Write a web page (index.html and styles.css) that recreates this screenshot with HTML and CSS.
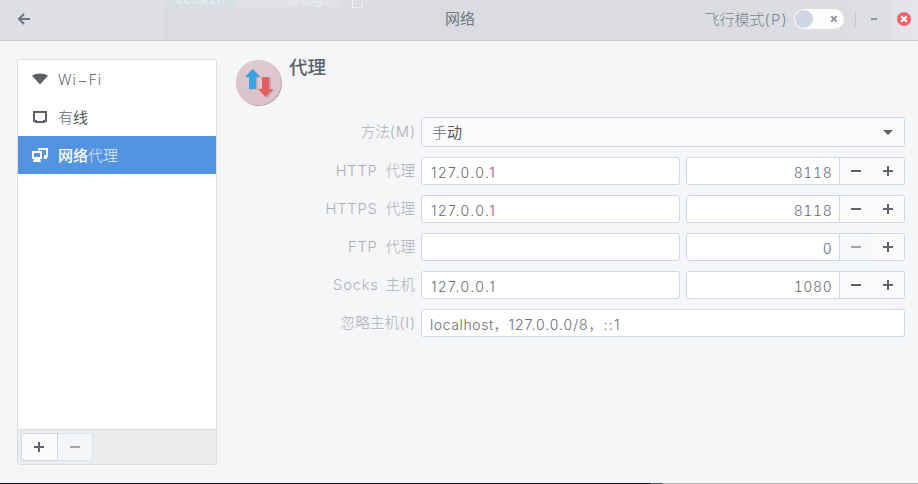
FILE: index.html
```html
<!DOCTYPE html>
<html lang="zh-CN">
<head>
<meta charset="utf-8">
<title>网络</title>
<link rel="stylesheet" href="styles.css">
</head>
<body>
<div class="window">
  <header class="titlebar">
    <div class="ghost"><div class="ghost-tab">teekin</div><div class="ghost-tab2">Blog</div><div class="ghost-box"></div></div>
    <svg class="back" width="14" height="14" viewBox="0 0 14 14"><path d="M13 7H2.5M7 2L2 7l5 5" fill="none" stroke="#6b728a" stroke-width="2"/></svg>
    <h1 class="title">网络</h1>
    <div class="controls">
      <span class="flight">飞行模式<span class="paren">(P)</span></span>
      <div class="switch"><span class="knob"></span><svg width="8" height="8" viewBox="0 0 8 8"><path d="M1.2 1.2l5.4 5.4M6.6 1.2L1.2 6.6" stroke="#8b8e97" stroke-width="1.8"/></svg></div>
      <span class="sep"></span>
      <span class="minimize"></span>
      <svg class="close" width="14" height="14" viewBox="0 0 14 14"><circle cx="7" cy="7" r="7" fill="#f8616b"/><path d="M4.2 4.2l5.6 5.6M9.8 4.2L4.2 9.8" stroke="#fff" stroke-width="2"/></svg>
    </div>
  </header>
  <div class="content">
    <aside class="sidebar">
      <ul class="devices">
        <li><svg width="16" height="16" viewBox="0 0 16 16"><path d="M0 4.8Q3 2.6 8 2.6T16 4.800L8 13.500z" fill="#5c616c"/></svg><span class="wifi">Wi<span class="dash">−</span>Fi</span></li>
        <li><svg width="16" height="16" viewBox="0 0 16 16"><path d="M2 3h12v9h-2v1H4v-1H2z" fill="none" stroke="#5c616c" stroke-width="2"/></svg><span>有<b>线</b></span></li>
        <li class="selected"><svg width="16" height="16" viewBox="0 0 16 16"><path d="M7 3.5V2h8v7h-3" fill="none" stroke="#fff" stroke-width="2"/><path d="M12 10h3v2h-3z" fill="#fff"/><path d="M1 5h8v6H1z" fill="none" stroke="#fff" stroke-width="2"/><path d="M2 12h6l1 3H1z" fill="#fff"/></svg><span><b>网络</b>代理</span></li>
      </ul>
      <div class="toolbar">
        <div class="tool add"><i class="plus"></i></div><div class="tool remove"><i class="minus"></i></div>
      </div>
    </aside>
    <main class="main">
      <div class="heading">
        <svg width="48" height="48" viewBox="0 0 48 48">
          <defs><linearGradient id="disc" x2="0" y2="1"><stop stop-color="#dfcbd1"/><stop offset="1" stop-color="#dac0c9"/></linearGradient></defs>
          <circle cx="24.2" cy="24.2" r="22.8" fill="#b9a5ad"/><circle cx="23.500" cy="23.500" r="22.600" fill="url(#disc)"/>
          <path d="M19 10.500L26 18.500H22.500V30.500H15V18.500H12z" fill="#c1a6b0"/><path d="M29 18.500h7v12h4L32 39l-7-7.500H29z" fill="#c1a6b0"/>
          <path d="M17.500 10L25 18h-4v12h-7V18h-4z" fill="#38a4e4"/><path d="M27 18h7v12h4l-7.500 8L23 30h4z" fill="#e75e62"/>
        </svg>
        <h2>代理</h2>
      </div>
      <div class="form">
        <label class="first">方法<span class="paren">(M)</span></label>
        <div class="select"><span>手<b>动</b></span><svg width="10" height="5" viewBox="0 0 10 5"><path d="M0 0h10L5 5z" fill="#5c616c"/></svg></div>

        <label><span class="http">HTTP</span>代理</label>
        <div class="pair"><div class="entry"><span class="ip">127.0.0.1</span></div><div class="spin"><span class="port">8118</span><div class="step"><i class="minus"></i></div><div class="step"><i class="plus"></i></div></div></div>

        <label><span class="https">HTTPS</span>代理</label>
        <div class="pair"><div class="entry"><span class="ip">127.0.0.1</span></div><div class="spin"><span class="port">8118</span><div class="step"><i class="minus"></i></div><div class="step"><i class="plus"></i></div></div></div>

        <label><span class="ftp">FTP</span>代理</label>
        <div class="pair"><div class="entry"></div><div class="spin"><span class="port">0</span><div class="step off"><i class="minus"></i></div><div class="step"><i class="plus"></i></div></div></div>

        <label><span class="socks">Socks</span>主机</label>
        <div class="pair"><div class="entry"><span class="ip">127.0.0.1</span></div><div class="spin"><span class="port">1080</span><div class="step"><i class="minus"></i></div><div class="step"><i class="plus"></i></div></div></div>

        <label>忽略主机<span class="paren">(I)</span></label>
        <div class="entry ignore"><span class="host">localhost，</span><span class="net">127.0.0.0/8，</span><span class="v6">::1</span></div>
      </div>
    </main>
  </div>
  <footer class="edge"></footer>
</div>
</body>
</html>
```
FILE: styles.css
```css
* { box-sizing: border-box; }
body { margin: 0; font: 300 14px/20px Inter, "Noto Sans CJK SC", sans-serif; color: #686d7a; }
.window { width: 918px; height: 484px; display: flex; flex-direction: column; background: #f5f6f8; overflow: hidden; }
b { font-weight: 400; color: #555a66; }

.titlebar { position: relative; height: 41px; flex: none; display: flex; align-items: center; justify-content: space-between; padding: 0 7px 2px 17px; border-bottom: 1px solid #c8cad0; background: linear-gradient(90deg, #dedfe3 0 163px, #dadce0 164px 660px, #dddee2 885px, #e3e4e9 900px, #e5e6eb); }
.ghost { position: absolute; inset: 0 0 auto 0; height: 8px; padding-left: 163px; display: flex; overflow: hidden; font: bold 14px/14px "Liberation Mono", monospace; color: #e8ebee; }
.ghost-tab { width: 74px; height: 7px; padding-left: 12px; background: #d5dfe6; line-height: 0; overflow: hidden; }
.ghost-tab2 { width: 104px; height: 7px; padding-left: 52px; line-height: 0; background: #dfe1e5; overflow: hidden; }
.ghost-box { width: 11px; height: 8px; margin-left: 11px; border: 1px solid #eceef0; border-top: 0; }
.title { position: absolute; left: 0; width: 100%; margin: 0; padding-left: 2px; text-align: center; font-size: 15px; font-weight: 400; color: #707689; }
.controls { display: flex; align-items: center; }
.flight { font-size: 15px; color: #7d8495; margin-right: 6px; padding-top: 2px; }
.paren { letter-spacing: 1.2px; }
.switch { width: 50px; height: 20px; border-radius: 10px; background: #fcfcfd; display: flex; align-items: center; justify-content: space-between; padding: 0 6px 0 1px; }
.knob { width: 18px; height: 18px; border-radius: 9px; background: #cfd6e6; }
.sep { width: 1px; height: 15px; background: #c6c8ce; margin: 0 15px 0 11px; }
.minimize { width: 6px; height: 2px; background: #8e93a1; margin-right: 20px; }

.content { flex: 1; display: flex; padding: 18px 13px 0 17px; }
.sidebar { width: 200px; height: 406px; border: 1px solid #dbdee3; border-radius: 0 0 3px 3px; background: #fff; display: flex; flex-direction: column; overflow: hidden; }
.devices { list-style: none; margin: 0; padding: 0; flex: 1; }
.devices li { height: 38px; display: flex; align-items: center; gap: 10px; padding-left: 14px; font-size: 15px; }
.devices li > span { padding-top: 2px; }
.devices .selected { background: #5294e2; color: #e4eefb; }
.selected b { color: #fff; font-weight: 500; }
.devices li > .wifi { font-size: 14px; letter-spacing: .9px; padding-top: 1px; }
.dash { display: inline-block; transform: scaleX(1.25); margin: 0 1px; }
.toolbar { height: 35px; border-top: 1px solid #dbdee3; background: #ebecee; padding: 3px; display: flex; }
.tool { height: 28px; border: 1px solid #cfd6e6; display: grid; place-items: center; }
.add { width: 37px; padding-right: 1px; border-radius: 3px 0 0 3px; background: #fbfbfc; }
.remove { width: 35px; border-left: 0; border-color: #dde3ed; border-radius: 0 3px 3px 0; background: #f4f5f7; }
.minus, .plus { width: 10px; height: 10px; background: linear-gradient(#5c616c, #5c616c) center / 10px 2px no-repeat; }
.plus { background: linear-gradient(#5c616c, #5c616c) center / 10px 2px no-repeat, linear-gradient(#5c616c, #5c616c) center / 2px 10px no-repeat; }
.remove .minus, .off .minus { opacity: .55; }

.main { flex: 1; padding-left: 18px; }
.heading { height: 58px; display: flex; gap: 6px; }
h2 { margin: -6px 0 0; font-size: 18.500px; line-height: 28px; font-weight: 500; color: #5c616c; }
.form { display: grid; grid-template-columns: 180px 484px; column-gap: 6px; row-gap: 10px; }
label { height: 28px; line-height: 28px; text-align: right; font-size: 14.700px; color: #acafb5; white-space: nowrap; display: flex; justify-content: flex-end; align-items: center; }
label .paren { margin-right: -1px; letter-spacing: .9px; }
.first { height: 30px; }
.select { height: 30px; border: 1px solid #cfd6e6; border-radius: 3px; background: #fbfbfc; padding: 0 11px 0 10px; display: flex; align-items: center; justify-content: space-between; font-size: 15px; }
.select span { padding-top: 1px; }
.pair { display: flex; gap: 6px; }
.entry, .spin { height: 28px; background: #fff; border: 1px solid #cfd6e6; border-radius: 3px; display: flex; align-items: center; color: #666b77; }
.entry { width: 259px; padding: 3px 0 0 9px; }
.ignore { width: 484px; padding-left: 8px; }
.spin { width: 219px; overflow: hidden; }
.port { width: 153px; padding: 3px 7px 0 0; text-align: right; font-variant-numeric: tabular-nums; letter-spacing: .6px; }
.step { width: 32px; height: 26px; display: grid; place-items: center; background: #fbfbfc; }
.port + .step { width: 33px; border-left: 1px solid #cfd6e6; }
.step.off { background: #f6f7f9; }
.http, .https, .ftp { letter-spacing: .8px; margin-right: 8px; }
.socks { letter-spacing: .8px; margin-right: 7px; }
.ip { letter-spacing: 1.450px; }
.host { letter-spacing: .6px; }
.net { letter-spacing: .95px; }
.v6 { letter-spacing: 1.300px; }

.edge { height: 1px; flex: none; background: linear-gradient(90deg, #111217 0 650px, #50545a 651px 662px, #b3b6b5 663px); }
```
